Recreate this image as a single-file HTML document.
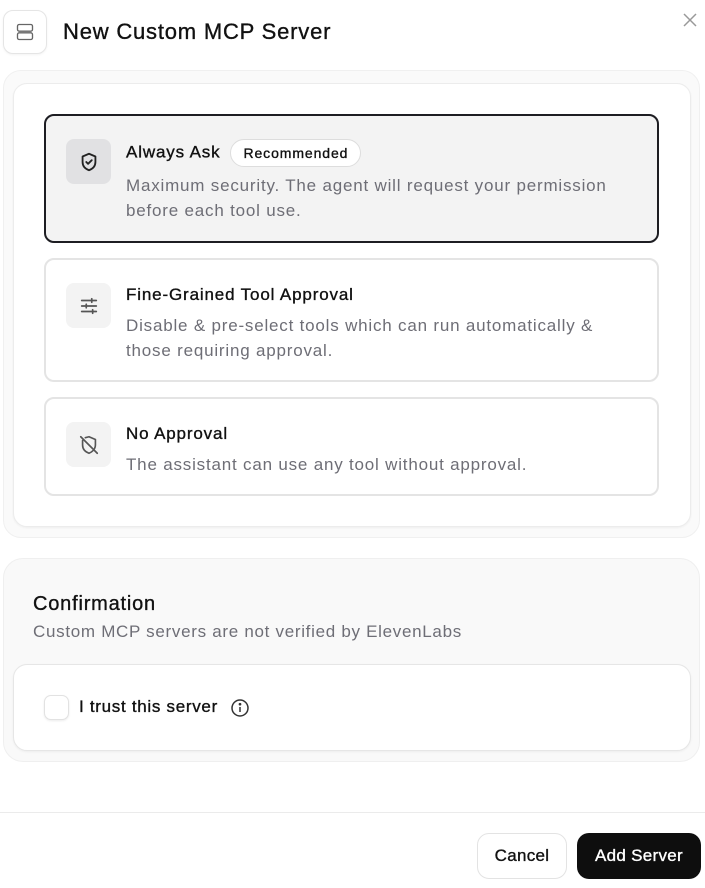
<!DOCTYPE html>
<html><head><meta charset="utf-8"><style>
*{box-sizing:border-box;margin:0;padding:0}
body{width:705px;height:888px;background:#fff;font-family:"Liberation Sans",sans-serif;position:relative;overflow:hidden;color:#111}
.abs{position:absolute}
.hicon{left:3px;top:10px;width:44px;height:44px;border:1px solid #e5e5e5;border-radius:10px;display:flex;align-items:center;justify-content:center;box-shadow:0 1px 2px rgba(0,0,0,.05)}
.md{-webkit-text-stroke:.35px currentColor}
.title{left:63px;top:19px;font-size:22px;font-weight:500;color:#111;letter-spacing:.8px}
.outer{left:3px;top:70px;width:697px;height:468px;border:1px solid #f0f0f0;border-radius:18px;background:#fafafa}
.inner{left:13px;top:83px;width:678px;height:444px;background:#fff;border:1px solid #ececec;border-radius:14px;box-shadow:0 1px 2px rgba(0,0,0,.05)}
.opt{left:44px;width:615px;border:2px solid #e4e4e4;border-radius:10px;background:#fff}
.opt.sel{background:#f3f3f3;border-color:#1d1d22}
.ib{position:absolute;left:20px;width:45px;height:45px;border-radius:8px;background:#f3f3f3;display:flex;align-items:center;justify-content:center}
.sel .ib{background:#e1e1e3}
.ot{position:absolute;left:80px;font-size:17px;font-weight:500;color:#111;letter-spacing:.85px;-webkit-text-stroke:.35px #111}
.od{position:absolute;left:80px;font-size:17px;line-height:25px;color:#6e6e76;letter-spacing:.8px}
.pill{display:inline-block;margin-left:10px;border:1px solid #ddd;border-radius:14px;padding:5px 12px;font-size:14px;font-weight:500;background:#fff;vertical-align:middle;letter-spacing:.9px}
.btn{top:833px;height:46px;border-radius:12px;font-size:17px;font-weight:500;display:flex;align-items:center;justify-content:center;letter-spacing:.3px}
</style></head><body>
<div class="abs hicon"><svg width="20" height="20" viewBox="0 0 24 24" fill="none" stroke="#666" stroke-width="1.6"><rect x="3" y="3" width="18" height="8" rx="2"/><rect x="3" y="13" width="18" height="8" rx="2"/><line x1="6" y1="7" x2="6.01" y2="7"/><line x1="6" y1="17" x2="6.01" y2="17"/></svg></div>
<div class="abs title md">New Custom MCP Server</div>
<svg class="abs" style="left:683px;top:13px" width="14" height="14" viewBox="0 0 14 14" stroke="#999" stroke-width="1.5"><line x1="1" y1="1" x2="13" y2="13"/><line x1="13" y1="1" x2="1" y2="13"/></svg>

<div class="abs outer"></div>
<div class="abs inner"></div>

<div class="abs opt sel" style="top:114px;height:129px">
 <div class="ib" style="top:23px"><svg width="22" height="22" viewBox="0 0 24 24" fill="none" stroke="#222" stroke-width="2" stroke-linecap="round" stroke-linejoin="round"><path d="M12 3l7 3v6c0 4.5-3 7.5-7 9-4-1.5-7-4.5-7-9V6z"/><path d="M9 12l2 2 4-4"/></svg></div>
 <div class="ot" style="top:23px">Always Ask<span class="pill">Recommended</span></div>
 <div class="od" style="top:57px">Maximum security. The agent will request your permission<br>before each tool use.</div>
</div>

<div class="abs opt" style="top:258px;height:124px">
 <div class="ib" style="top:23px"><svg width="22" height="22" viewBox="0 0 24 24" fill="none" stroke="#555" stroke-width="1.8" stroke-linecap="round"><line x1="4" y1="6" x2="20" y2="6"/><line x1="4" y1="12" x2="20" y2="12"/><line x1="4" y1="18" x2="20" y2="18"/><line x1="15" y1="4" x2="15" y2="8"/><line x1="9" y1="10" x2="9" y2="14"/><line x1="16" y1="16" x2="16" y2="20"/></svg></div>
 <div class="ot" style="top:25px">Fine-Grained Tool Approval</div>
 <div class="od" style="top:53px">Disable &amp; pre-select tools which can run automatically &amp;<br>those requiring approval.</div>
</div>

<div class="abs opt" style="top:397px;height:99px">
 <div class="ib" style="top:23px"><svg width="22" height="22" viewBox="0 0 24 24" fill="none" stroke="#555" stroke-width="1.8" stroke-linecap="round" stroke-linejoin="round"><path d="M8 4l4-1 7 3v6c0 1.5-.4 2.9-1 4"/><path d="M5 7v5c0 4.5 3 7.5 7 9 1.8-.7 3.3-1.7 4.5-3"/><line x1="3" y1="3" x2="21" y2="21"/></svg></div>
 <div class="ot" style="top:25px">No Approval</div>
 <div class="od" style="top:53px">The assistant can use any tool without approval.</div>
</div>

<div class="abs" style="left:3px;top:558px;width:697px;height:204px;background:#f9f9f9;border:1px solid #efefef;border-radius:20px"></div>
<div class="abs md" style="left:33px;top:593px;font-size:20px;font-weight:500;letter-spacing:.8px">Confirmation</div>
<div class="abs" style="left:33px;top:622px;font-size:17px;color:#6e6e76;letter-spacing:.7px">Custom MCP servers are not verified by ElevenLabs</div>
<div class="abs" style="left:13px;top:664px;width:678px;height:87px;background:#fff;border:1px solid #e6e6e6;border-radius:14px;box-shadow:0 1px 2px rgba(0,0,0,.05)"></div>
<div class="abs" style="left:44px;top:695px;width:25px;height:25px;border:1px solid #e2e2e2;border-radius:7px;background:#fff;box-shadow:0 1px 2px rgba(0,0,0,.08)"></div>
<div class="abs md" style="left:79px;top:697px;font-size:17px;font-weight:500;letter-spacing:.7px">I trust this server</div>
<svg class="abs" style="left:230px;top:698px" width="20" height="20" viewBox="0 0 20 20" fill="none" stroke="#333" stroke-width="1.5"><circle cx="10" cy="10" r="8"/><line x1="10" y1="9" x2="10" y2="14"/><circle cx="10" cy="6.2" r=".6" fill="#333"/></svg>

<div class="abs" style="left:0;top:812px;width:705px;height:1px;background:#ebebeb"></div>
<div class="abs btn md" style="left:477px;width:90px;border:1px solid #e3e3e3;background:#fff">Cancel</div>
<div class="abs btn md" style="left:577px;width:124px;background:#0e0e0e;color:#fff">Add Server</div>
</body></html>
